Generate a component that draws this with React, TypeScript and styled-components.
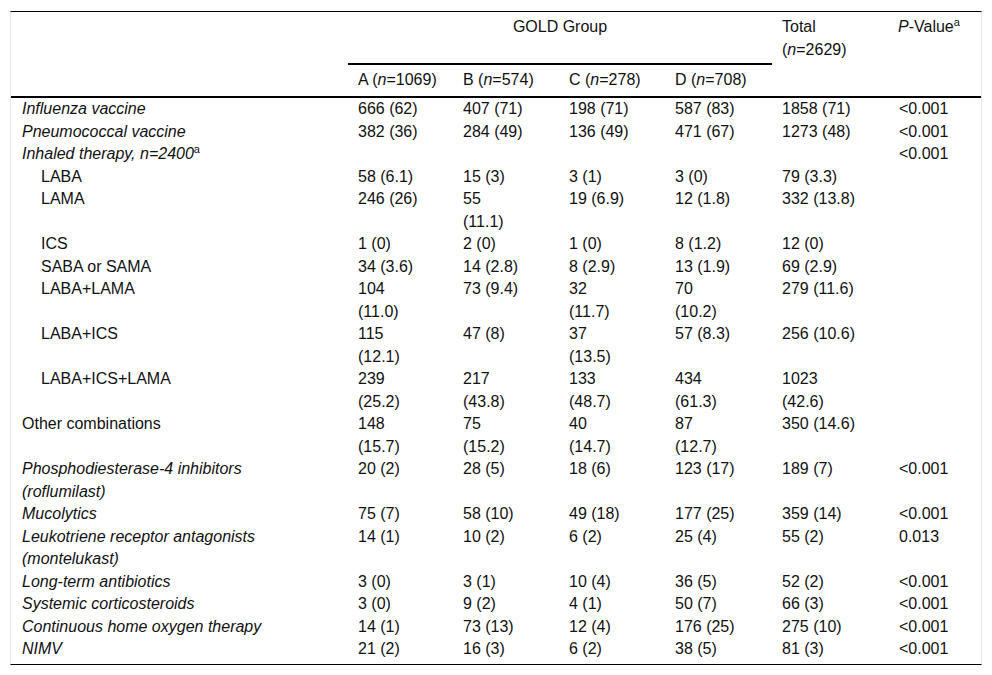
import React from 'react';
import styled, { createGlobalStyle } from 'styled-components';

type Kind = 'group' | 'total' | 'p';

type Row = {
  label: string;
  style: 'italic' | 'plain' | 'indent';
  note?: boolean;
  values: string[];
};

const rows: Row[] = [
  { label: 'Influenza vaccine', style: 'italic', values: ['666 (62)', '407 (71)', '198 (71)', '587 (83)', '1858 (71)', '<0.001'] },
  { label: 'Pneumococcal vaccine', style: 'italic', values: ['382 (36)', '284 (49)', '136 (49)', '471 (67)', '1273 (48)', '<0.001'] },
  { label: 'Inhaled therapy, n=2400', style: 'italic', note: true, values: ['', '', '', '', '', '<0.001'] },
  { label: 'LABA', style: 'indent', values: ['58 (6.1)', '15 (3)', '3 (1)', '3 (0)', '79 (3.3)', ''] },
  { label: 'LAMA', style: 'indent', values: ['246 (26)', '55 (11.1)', '19 (6.9)', '12 (1.8)', '332 (13.8)', ''] },
  { label: 'ICS', style: 'indent', values: ['1 (0)', '2 (0)', '1 (0)', '8 (1.2)', '12 (0)', ''] },
  { label: 'SABA or SAMA', style: 'indent', values: ['34 (3.6)', '14 (2.8)', '8 (2.9)', '13 (1.9)', '69 (2.9)', ''] },
  { label: 'LABA+LAMA', style: 'indent', values: ['104 (11.0)', '73 (9.4)', '32 (11.7)', '70 (10.2)', '279 (11.6)', ''] },
  { label: 'LABA+ICS', style: 'indent', values: ['115 (12.1)', '47 (8)', '37 (13.5)', '57 (8.3)', '256 (10.6)', ''] },
  { label: 'LABA+ICS+LAMA', style: 'indent', values: ['239 (25.2)', '217 (43.8)', '133 (48.7)', '434 (61.3)', '1023 (42.6)', ''] },
  { label: 'Other combinations', style: 'plain', values: ['148 (15.7)', '75 (15.2)', '40 (14.7)', '87 (12.7)', '350 (14.6)', ''] },
  { label: 'Phosphodiesterase-4 inhibitors (roflumilast)', style: 'italic', values: ['20 (2)', '28 (5)', '18 (6)', '123 (17)', '189 (7)', '<0.001'] },
  { label: 'Mucolytics', style: 'italic', values: ['75 (7)', '58 (10)', '49 (18)', '177 (25)', '359 (14)', '<0.001'] },
  { label: 'Leukotriene receptor antagonists (montelukast)', style: 'italic', values: ['14 (1)', '10 (2)', '6 (2)', '25 (4)', '55 (2)', '0.013'] },
  { label: 'Long-term antibiotics', style: 'italic', values: ['3 (0)', '3 (1)', '10 (4)', '36 (5)', '52 (2)', '<0.001'] },
  { label: 'Systemic corticosteroids', style: 'italic', values: ['3 (0)', '9 (2)', '4 (1)', '50 (7)', '66 (3)', '<0.001'] },
  { label: 'Continuous home oxygen therapy', style: 'italic', values: ['14 (1)', '73 (13)', '12 (4)', '176 (25)', '275 (10)', '<0.001'] },
  { label: 'NIMV', style: 'italic', values: ['21 (2)', '16 (3)', '6 (2)', '38 (5)', '81 (3)', '<0.001'] },
];

const colWidths = [337, 105, 106, 106, 107, 116, 93];
const valueKinds: Kind[] = ['group', 'group', 'group', 'group', 'total', 'p'];

export default function App() {
  return (
    <>
      <GlobalStyle />
      <Page>
        <TableFrame>
          <Table>
            <colgroup>
              {colWidths.map((w, i) => (
                <Col key={i} $w={w} />
              ))}
            </colgroup>
            <thead>
              <tr>
                <HeadCell rowSpan={2} />
                <GroupHeadCell colSpan={4}>GOLD Group</GroupHeadCell>
                <HeadCell rowSpan={2}>
                  Total (<i>n</i>=2629)
                </HeadCell>
                <HeadCell rowSpan={2}>
                  <i>P</i>-Value<Sup>a</Sup>
                </HeadCell>
              </tr>
              <tr>
                <SubHeadCell>
                  A (<i>n</i>=1069)
                </SubHeadCell>
                <SubHeadCell>
                  B (<i>n</i>=574)
                </SubHeadCell>
                <SubHeadCell>
                  C (<i>n</i>=278)
                </SubHeadCell>
                <SubHeadCell>
                  D (<i>n</i>=708)
                </SubHeadCell>
              </tr>
            </thead>
            <tbody>
              {rows.map((row, r) => (
                <BodyRow key={r}>
                  <LabelCell $style={row.style}>
                    {row.label}
                    {row.note && <Sup>a</Sup>}
                  </LabelCell>
                  {row.values.map((v, i) => (
                    <ValueCell key={i} $kind={valueKinds[i]}>
                      {v}
                    </ValueCell>
                  ))}
                </BodyRow>
              ))}
            </tbody>
          </Table>
        </TableFrame>
      </Page>
    </>
  );
}

const GlobalStyle = createGlobalStyle`
  body {
    margin: 0;
    background: #ffffff;
    color: #111111;
    font-family: "Liberation Sans", Arial, sans-serif;
  }
`;

// ページ全体の余白
const Page = styled.div`
  padding: 11px 10px 0;
`;

// 上下は黒い罫線、左右はうすいグレー
const TableFrame = styled.div`
  display: inline-block;
  border-top: 1px solid #000000;
  border-bottom: 1px solid #000000;
  border-left: 1px solid #e6e6e6;
  border-right: 1px solid #e6e6e6;
`;

const Table = styled.table`
  table-layout: fixed;
  width: 970px;
  border-collapse: separate;
  border-spacing: 0;
  font-size: 16px;
  line-height: 22.5px;
`;

const Col = styled.col<{ $w: number }>`
  width: ${(p) => p.$w}px;
`;

const Sup = styled.sup`
  font-size: 11px;
  font-style: normal;
  line-height: 0;
  vertical-align: 6px;
`;

// ヘッダーのセル（左・Total・P-Value）。下に太い罫線
const HeadCell = styled.th`
  font-weight: 400;
  text-align: left;
  vertical-align: top;
  padding: 4px 10px;
  border-bottom: 2px solid #000000;
`;

// 「GOLD Group」見出し
const GroupHeadCell = styled.th`
  font-weight: 400;
  text-align: center;
  vertical-align: top;
  padding: 4px 10px 24px;
  border-bottom: 2px solid #000000;
`;

// A〜Dの見出し
const SubHeadCell = styled.th`
  font-weight: 400;
  text-align: left;
  vertical-align: top;
  padding: 4px 10px 5px;
  border-bottom: 2px solid #000000;
  white-space: nowrap;
`;

const BodyRow = styled.tr`
  &:last-child td {
    padding-bottom: 3px;
  }
`;

const LabelCell = styled.td<{ $style: Row['style'] }>`
  vertical-align: top;
  padding: 0 45px 0 ${(p) => (p.$style === 'indent' ? 30 : 11)}px;
  font-style: ${(p) => (p.$style === 'italic' ? 'italic' : 'normal')};
`;

const padRight: Record<Kind, number> = { group: 34, total: 29, p: 10 };

const ValueCell = styled.td<{ $kind: Kind }>`
  vertical-align: top;
  padding: 0 ${(p) => padRight[p.$kind]}px 0 ${(p) => (p.$kind === 'p' ? 11 : 10)}px;
`;
